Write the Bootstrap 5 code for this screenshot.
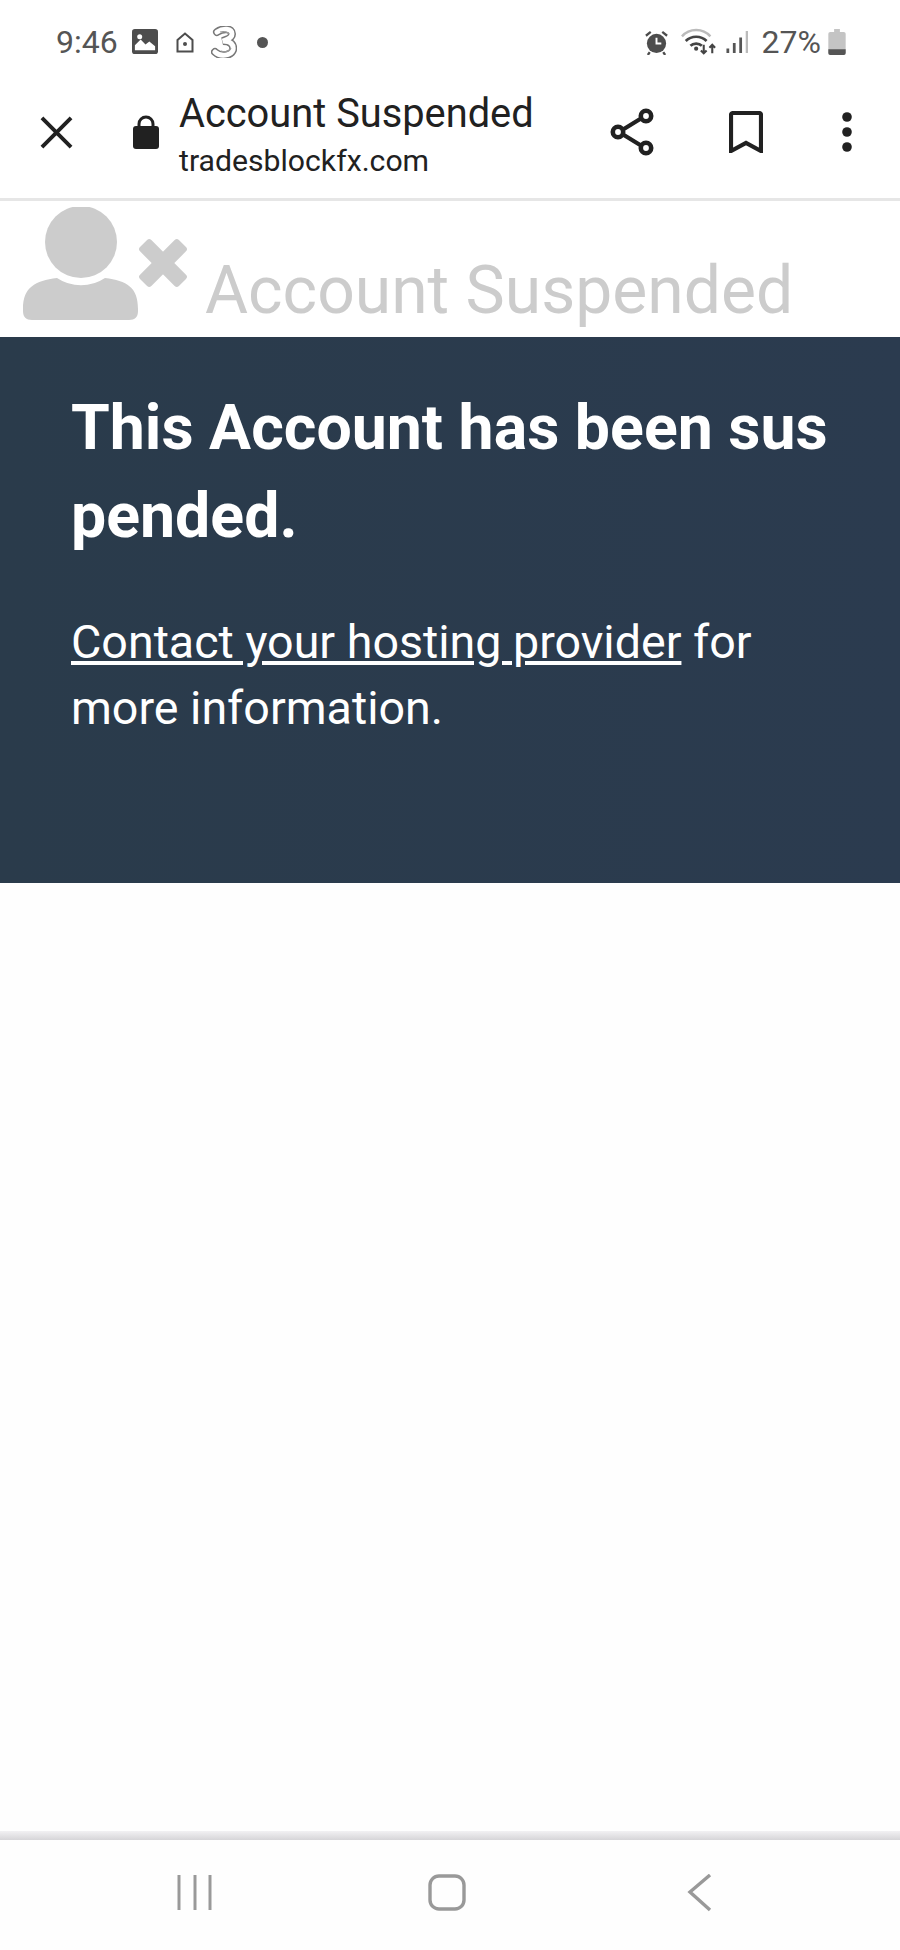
<!DOCTYPE html>
<html lang="en">
<head>
  <meta charset="UTF-8" />
  <meta name="viewport" content="width=device-width, initial-scale=1" />
  <title>Account Suspended</title>
  <link href="https://cdn.jsdelivr.net/npm/bootstrap@5.3.3/dist/css/bootstrap.min.css" rel="stylesheet" />
  <style>
    body { font-family: Roboto, "Liberation Sans", sans-serif; background: #fff; height: 1950px; width: 900px; overflow: hidden; }
    .phone-status { height: 84px; padding: 0 54px 0 56px; color: #555; font-size: 32px; line-height: 1; }
    .phone-status svg { display: block; flex: none; }
    .st-image { margin-left: 14px; }
    .st-home { margin-left: 18px; }
    .st-three { margin-left: 17px; }
    .st-dot { margin-left: 20px; }
    .st-wifi { margin-left: 12px; }
    .st-signal { margin-left: 9px; }
    .st-pct { margin-left: 14px; }
    .st-batt { margin-left: 7px; }
    .tab-bar { height: 117px; border-bottom: 3px solid #e6e6e6; padding: 0 48px 18px 40px; color: #212121; }
    .tab-bar svg { display: block; flex: none; }
    .tab-title { font-size: 39.800px; line-height: 50px; }
    .tab-host { font-size: 30.200px; line-height: 44px; }
    .tab-lock { margin-left: 60px; margin-right: 20px; }
    .tab-text { margin-top: 8px; }
    .tab-tools { margin-left: auto; }
    .tool-save { margin-left: 75px; margin-right: 79px; }
    .hero-strip { height: 136px; padding-left: 23px; overflow: hidden; }
    .hero-strip svg { display: block; flex: none; margin-top: 6px; }
    .hero-title { color: #ccc; font-size: 66px; line-height: 74px; margin: 0 0 0 16px; padding-top: 53px; font-weight: 400; white-space: nowrap; }
    .notice { height: 546px; background: linear-gradient(90deg, #2a3b4b, #2b3b4f); color: #fff; padding: 47px 50px 0 71px; }
    .notice h3 { font-size: 62.600px; line-height: 88px; font-weight: 700; word-break: break-all; margin: 0 0 49px; }
    .notice p { font-size: 46.600px; line-height: 66px; margin: 0; }
    .notice a { color: #fff; }
    .page-fill { height: 948px; background: #fefefe; }
    .keys-rule { height: 9px; background: linear-gradient(180deg, #f2f1f3, #d6d5d8); }
    .soft-keys { height: 110px; background: #fefefe; padding-top: 34px; }
    .soft-keys svg { display: block; }
  </style>
</head>
<body>

<!-- status bar -->
<div class="phone-status d-flex align-items-center">
  <span>9:46</span>
  <svg class="st-image" width="26" height="26" viewBox="0 0 27 27"><rect width="27" height="26" rx="3" fill="#4d4d4d"/><path d="M3 22v-5l6-6 5 5 4-3 6 5v4z" fill="#fff"/><circle cx="8" cy="8" r="2.6" fill="#fff"/></svg>
  <svg class="st-home" width="18" height="21" viewBox="0 0 18 21"><path d="M1.500 19.500V8L9 1.500 16.500 8v11.500z" fill="none" stroke="#4d4d4d" stroke-width="2"/><circle cx="9" cy="12" r="2" fill="#4d4d4d"/></svg>
  <svg class="st-three" width="26" height="32" viewBox="0 0 26 32"><path d="M6 6C12 2 21 2 21 8c0 5-7 6-9 7 8 0 11 4 10 9-2 6-13 7-18 2" fill="none" stroke="#777" stroke-width="8" stroke-linecap="round"/><path d="M6 6C12 2 21 2 21 8c0 5-7 6-9 7 8 0 11 4 10 9-2 6-13 7-18 2" fill="none" stroke="#fff" stroke-width="5" stroke-linecap="round"/><path d="M9 6c4-1 8 0 9 2M10 25c4 2 9 0 10-3" fill="none" stroke="#999" stroke-width="1.200"/></svg>
  <svg class="st-dot" width="11" height="11" viewBox="0 0 10 10"><circle cx="5" cy="5" r="5" fill="#555"/></svg>
  <div class="d-flex align-items-center ms-auto">
    <svg width="25" height="25" viewBox="0 0 26 26"><circle cx="13" cy="14" r="10" fill="#4d4d4d"/><path d="M2 6l5-4M24 6l-5-4M6 23l-2 3M20 23l2 3" stroke="#4d4d4d" stroke-width="2.400"/><path d="M13 8v6h5" fill="none" stroke="#fff" stroke-width="2"/></svg>
    <svg class="st-wifi" width="36" height="28" viewBox="0 0 38 28"><path d="M1 8C9-1 23-1 31 8" fill="none" stroke="#bbb" stroke-width="2.600"/><path d="M5 13c6-6 16-6 22 0M10 18c3-3 9-3 12 0" fill="none" stroke="#444" stroke-width="2.800"/><circle cx="16" cy="21" r="2.200" fill="#444"/><path d="M24 17v9M21 23l3 3 3-3M33 26v-9M30 20l3-3 3 3" fill="none" stroke="#444" stroke-width="2.200"/></svg>
    <svg class="st-signal" width="22" height="24" viewBox="0 0 24 26"><path d="M2 25v-5M9 25v-11M16 25V8" stroke="#555" stroke-width="3"/><path d="M23 25V1" stroke="#bbb" stroke-width="3"/></svg>
    <span class="st-pct">27%</span>
    <svg class="st-batt" width="18" height="26" viewBox="0 0 18 27"><path d="M6 0h6v3h4a2 2 0 0 1 2 2v20a2 2 0 0 1-2 2H2a2 2 0 0 1-2-2V5a2 2 0 0 1 2-2h4z" fill="#c4c4c4"/><path d="M0 21h18v4a2 2 0 0 1-2 2H2a2 2 0 0 1-2-2z" fill="#555"/></svg>
  </div>
</div>

<!-- custom tab toolbar -->
<div class="tab-bar d-flex align-items-center">
  <svg width="33" height="33" viewBox="0 0 34 34"><path d="M2 2l30 30M32 2L2 32" stroke="#212121" stroke-width="4"/></svg>
  <svg class="tab-lock" width="26" height="34" viewBox="0 0 26 34"><path d="M6 12V9a7 7 0 0 1 14 0v3" fill="none" stroke="#212121" stroke-width="3"/><rect y="11" width="26" height="23" rx="3" fill="#212121"/></svg>
  <div class="tab-text">
    <div class="tab-title">Account Suspended</div>
    <div class="tab-host">tradesblockfx.com</div>
  </div>
  <div class="tab-tools d-flex align-items-center">
    <svg width="44" height="48" viewBox="0 0 44 48"><path d="M9 24L35 8M9 24l26 16" stroke="#212121" stroke-width="4.200"/><circle cx="8" cy="24" r="5.200" fill="#fff" stroke="#212121" stroke-width="4.600"/><circle cx="36" cy="8" r="5.200" fill="#fff" stroke="#212121" stroke-width="4.600"/><circle cx="36" cy="40" r="5.200" fill="#fff" stroke="#212121" stroke-width="4.600"/></svg>
    <svg class="tool-save" width="34" height="42" viewBox="0 0 34 42"><path d="M2 40V4a2 2 0 0 1 2-2h26a2 2 0 0 1 2 2v36l-15-8z" fill="none" stroke="#212121" stroke-width="4.200"/></svg>
    <svg width="10" height="40" viewBox="0 0 10 40"><circle cx="5" cy="5" r="4.800" fill="#212121"/><circle cx="5" cy="20" r="4.800" fill="#212121"/><circle cx="5" cy="35" r="4.800" fill="#212121"/></svg>
  </div>
</div>

<!-- page header -->
<div class="hero-strip d-flex">
  <svg width="166" height="116" viewBox="0 0 166 116">
    <circle cx="58" cy="35" r="36" fill="#ccc"/>
    <path d="M34 71A43 43 0 0 0 82 71C104 74 115 80 115 102v2c0 6-3 9-9 9H9c-6 0-9-3-9-9v-2C0 80 12 74 34 71z" fill="#ccc"/>
    <rect x="112.500" y="48" width="55" height="16" rx="3" fill="#ccc" transform="rotate(45 140 56)"/>
    <rect x="112.500" y="48" width="55" height="16" rx="3" fill="#ccc" transform="rotate(-45 140 56)"/>
  </svg>
  <h1 class="hero-title">Account Suspended</h1>
</div>

<!-- suspended message -->
<div class="notice">
  <h3>This Account has been suspended.</h3>
  <p><a href="#">Contact your hosting provider</a> for more information.</p>
</div>

<div class="page-fill"></div>

<!-- android nav -->
<div class="keys-rule"></div>
<div class="soft-keys d-flex justify-content-between align-items-start">
  <svg width="900" height="38" viewBox="0 0 900 38"><path d="M179 1v35M195 1v35M210 1v35" stroke="#999" stroke-width="3"/><rect x="430" y="2" width="34" height="33" rx="9" fill="none" stroke="#999" stroke-width="3.400"/><path d="M710 1L690 18l20 18" fill="none" stroke="#999" stroke-width="3.400"/></svg>
</div>

<script src="https://cdn.jsdelivr.net/npm/bootstrap@5.3.3/dist/js/bootstrap.bundle.min.js"></script>
</body>
</html>
